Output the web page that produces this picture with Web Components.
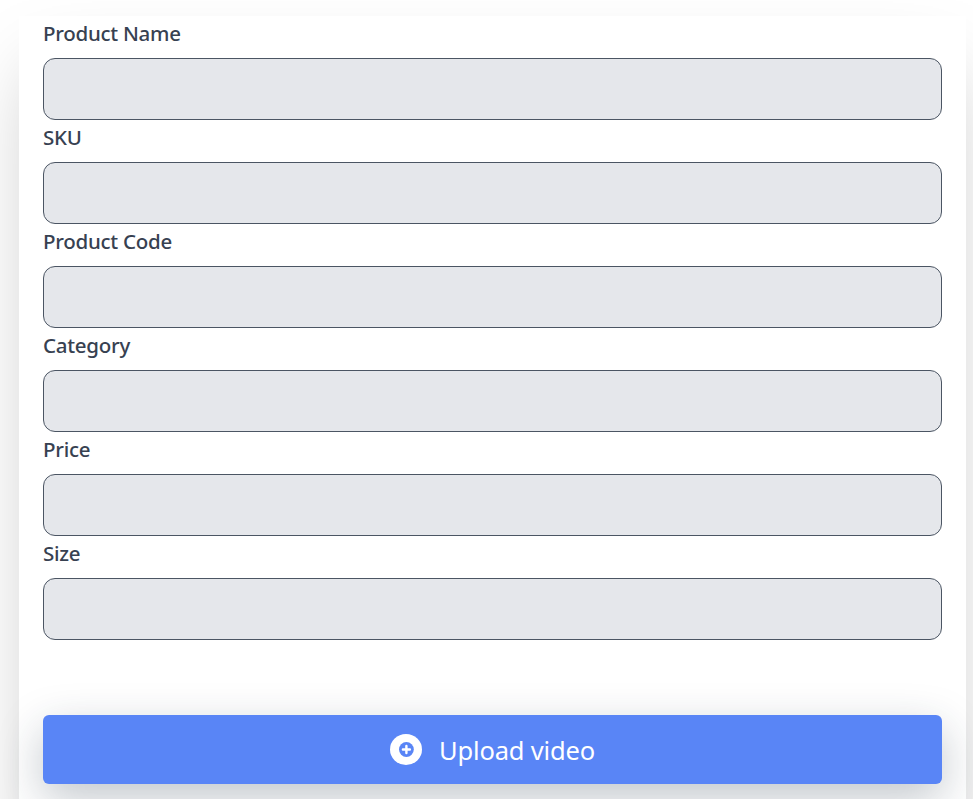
<!DOCTYPE html>
<html lang="en">
<head>
<meta charset="utf-8">
<title>Product form</title>
<style>
html, body { height: 100%; }
body { margin: 0; background: #fff; overflow: hidden; font-family: "Noto Sans", "Open Sans", sans-serif; }
</style>
</head>
<body>
<product-form>
  <form-field>Product Name</form-field>
  <form-field>SKU</form-field>
  <form-field>Product Code</form-field>
  <form-field>Category</form-field>
  <form-field>Price</form-field>
  <form-field>Size</form-field>
  <upload-button slot="action">Upload video</upload-button>
</product-form>
<script>
const define = (name, html) => customElements.define(name, class extends HTMLElement {
  constructor() {
    super();
    this.attachShadow({ mode: "open" }).innerHTML = html;
  }
});

define("plus-icon", `
<style>:host{display:block;width:32px;height:32px}svg{display:block}</style>
<svg width="32" height="32" viewBox="0 0 32 32" fill="none">
  <ellipse cx="16" cy="15.5" rx="16" ry="15.5" fill="#fff"/>
  <circle cx="16.4" cy="15.5" r="7.4" fill="#5985f6"/>
  <path d="M16.4 12v7M12.9 15.5h7" stroke="#fff" stroke-width="2.4" stroke-linecap="round"/>
</svg>`);

define("form-field", `
<style>
:host{display:block;height:104px}
label{display:block;box-sizing:border-box;height:42px;padding-top:1px;line-height:32px;font-size:20.5px;font-weight:500;color:#374151;letter-spacing:-.27px;white-space:nowrap}
input{display:block;box-sizing:border-box;width:100%;height:62px;margin:0;padding:12px 24px;border:1px solid #4b5563;border-radius:12px;background:#e5e7eb;font:inherit;outline:none}
</style>
<label for="value"><slot></slot></label>
<input id="value" type="text">`);

define("upload-button", `
<style>
:host{display:block}
button{display:flex;align-items:center;justify-content:center;gap:17px;width:100%;height:69px;margin:0;padding:0;border:0;border-radius:6px;background:#5985f6;color:#fff;font:25.5px/36px "Noto Sans","Open Sans",sans-serif;letter-spacing:-.17px;box-shadow:0 15px 45px rgba(31,48,65,.27)}
span{white-space:nowrap;padding-top:1px}
</style>
<button type="button"><plus-icon></plus-icon><span><slot></slot></span></button>`);

define("product-form", `
<style>
:host{display:block;box-sizing:border-box;height:799px;overflow:hidden;padding:16px 7px 0 19px}
form{display:block;box-sizing:border-box;height:1000px;padding:0 24px;background:#fff;box-shadow:0 37.5px 75px -18px rgba(0,0,0,.25)}
.action{margin-top:75px}
</style>
<form><slot></slot><div class="action"><slot name="action"></slot></div></form>`);
</script>
</body>
</html>
